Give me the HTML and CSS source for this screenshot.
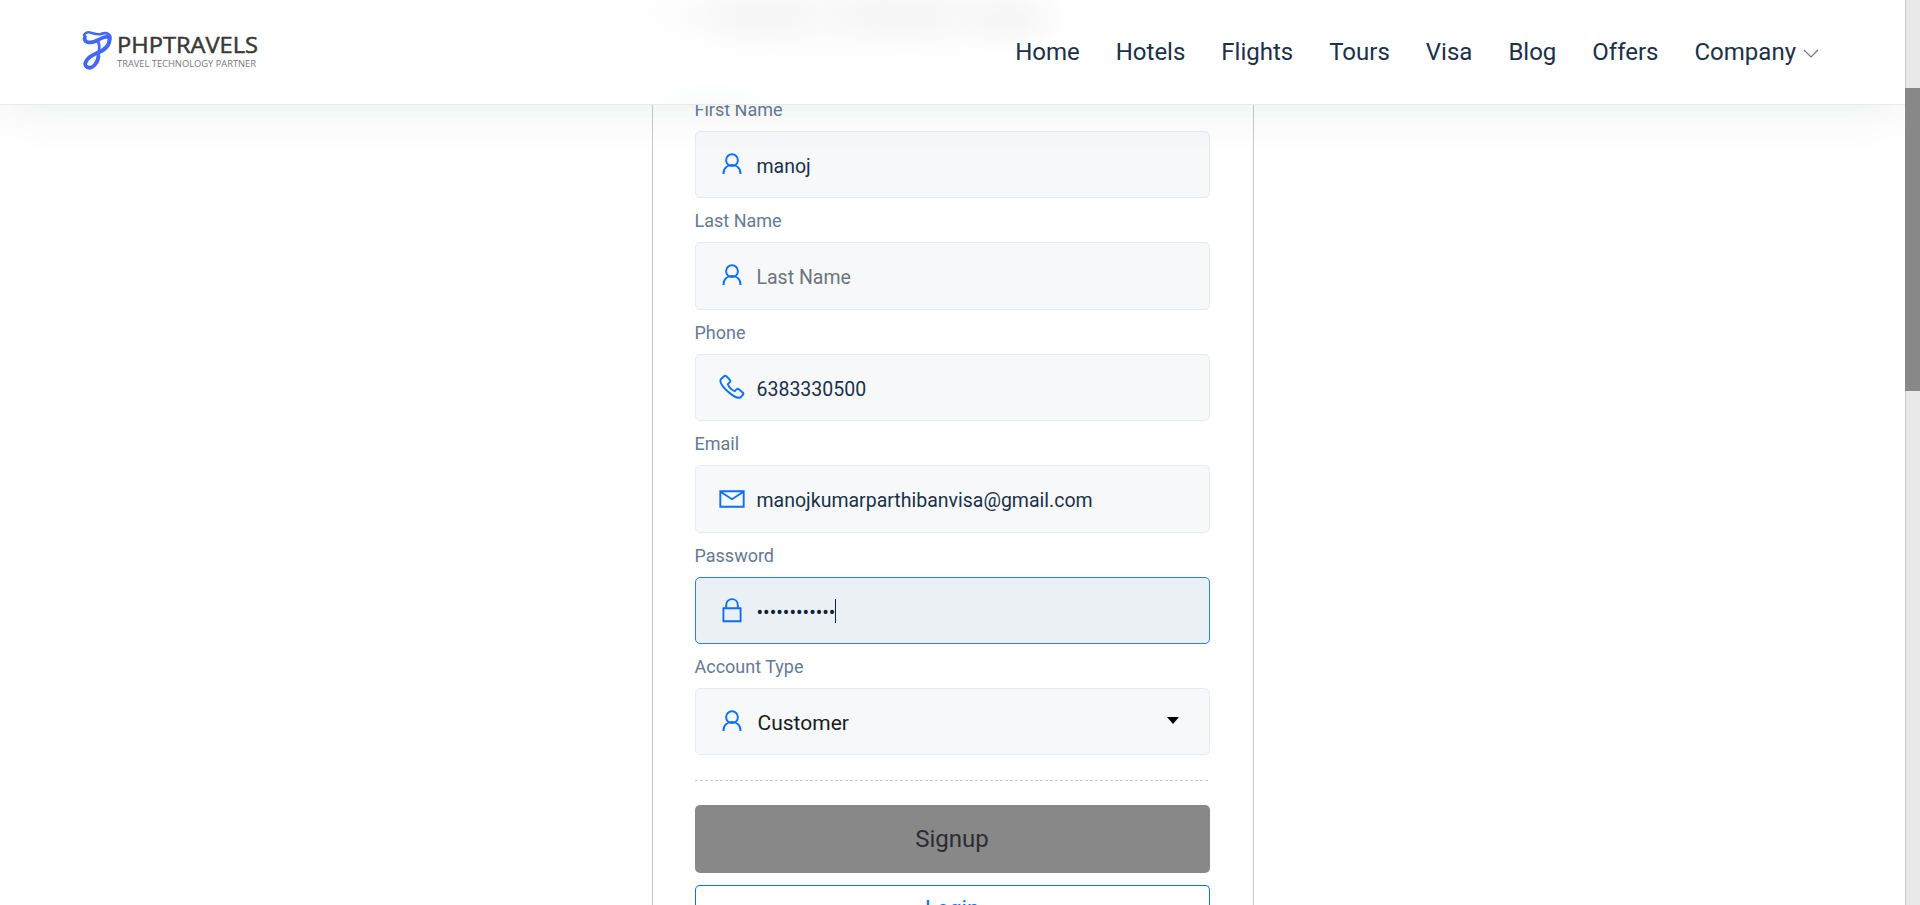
FILE: index.html
```html
<!DOCTYPE html>
<html lang="en">
<head>
<meta charset="utf-8">
<title>Signup - PHPTRAVELS</title>
<link rel="stylesheet" href="styles.css">
</head>
<body>
<svg class="defs" width="0" height="0">
  <symbol id="user" viewBox="0 0 26 26"><circle cx="13" cy="8.2" r="5.9"/><path d="M4.4 21.9C4.4 9.8 21.6 9.8 21.6 21.9"/></symbol>
  <symbol id="phone" viewBox="0 0 26 26"><path d="M5 2.2Q6.200 1.200 7.400 2.200L11 6.200Q11.700 7.300 10.800 8.200L8.800 10.200C10 13.400 12.900 16.200 15.800 17.100L17.700 15.200Q18.800 14.400 19.800 15.200L23.900 18.700Q24.800 19.700 23.900 20.900L21.400 23.400C17 26.500 -1.200 10.500 1.800 5.300Z"/></symbol>
  <symbol id="mail" viewBox="0 0 26 26"><path d="M1.300 5.200H24.700V20.700H1.300ZM1.500 5.700L13 13.200L24.500 5.700"/></symbol>
  <symbol id="lock" viewBox="0 0 26 26"><path d="M4.400 11.300H21.600V24.200H4.400ZM7.200 11V8C7.200 0.200 18.800 0.200 18.800 8V11"/></symbol>
</svg>
<div class="window">
  <div class="page">
    <header class="navbar">
      <svg class="logo" viewBox="0 0 184 44" width="184" height="44">
        <g class="ribbon">
          <path class="thick" d="M4 9C2 14 8 16 15 13C22 9 28 7 28.500 11C29 19 22 23 14 26C5 30 2 37 6 39C11 42 17 35 17.500 28"/>
          <path class="thin" d="M3 7C7 0.500 13 8 20 6C26 3.500 31 7 29 12M15 12C20 14 18 22 17.500 27"/>
        </g>
        <text class="brand" x="36" y="25" textLength="141" lengthAdjust="spacingAndGlyphs">PHPTRAVELS</text>
        <text class="tagline" x="36" y="38.500" textLength="139" lengthAdjust="spacingAndGlyphs">TRAVEL TECHNOLOGY PARTNER</text>
      </svg>
      <nav class="menu">
        <a>Home</a><a>Hotels</a><a>Flights</a><a>Tours</a><a>Visa</a><a>Blog</a><a>Offers</a>
        <a class="company">Company<svg class="chevron" width="16" height="10" viewBox="0 0 16 10"><path d="M1 1L8 8L15 1"/></svg></a>
      </nav>
    </header>
    <main class="card">
      <div class="field"><label>First Name</label><div class="input"><svg class="icon"><use href="#user"/></svg><span>manoj</span></div></div>
      <div class="field"><label>Last Name</label><div class="input placeholder"><svg class="icon"><use href="#user"/></svg><span>Last Name</span></div></div>
      <div class="field"><label>Phone</label><div class="input"><svg class="icon"><use href="#phone"/></svg><span>6383330500</span></div></div>
      <div class="field"><label>Email</label><div class="input"><svg class="icon"><use href="#mail"/></svg><span>manojkumarparthibanvisa@gmail.com</span></div></div>
      <div class="field"><label>Password</label><div class="input focused"><svg class="icon"><use href="#lock"/></svg><span class="password">••••••••••••</span><i class="caret"></i></div></div>
      <div class="field"><label>Account Type</label><div class="input select"><svg class="icon"><use href="#user"/></svg><span>Customer</span><i class="arrow"></i></div></div>
      <div class="divider"></div>
      <div class="button signup">Signup</div>
      <div class="button login">Login</div>
    </main>
  </div>
  <div class="scrollbar"><div class="thumb"></div></div>
</div>
</body>
</html>
```
FILE: styles.css
```css
* { box-sizing: border-box; }
body { margin: 0; background: #fff; color: #1b3049; font-family: Roboto, sans-serif; overflow: hidden; }
.defs { display: block; height: 0; }
.window { display: flex; width: 100%; height: 905px; }
.page { flex: 1; height: 905px; overflow: hidden; display: flex; flex-direction: column; align-items: center; }
.navbar {
  position: relative; flex: none; width: 100%; height: 105px; padding: 0 86px 0 81px;
  display: flex; justify-content: space-between; align-items: flex-start;
  border-bottom: 1px solid #e9eaeb;
  box-shadow: 0 0 50px rgba(82, 90, 95, .12);
  background:
    radial-gradient(ellipse 80px 34px at 760px 16px, #f5f5f5, rgba(255,255,255,0)),
    radial-gradient(ellipse 90px 34px at 905px 16px, #f5f5f5, rgba(255,255,255,0)),
    radial-gradient(ellipse 60px 36px at 1007px 18px, #f5f5f5, rgba(255,255,255,0)),
    radial-gradient(ellipse 75px 24px at 712px 104px, #f9fbfb, rgba(255,255,255,0)),
    radial-gradient(ellipse 260px 60px at 850px 14px, #f9f9f9, rgba(255,255,255,0)), #fff;
}
.logo { margin-top: 28px; overflow: visible; }
.ribbon { fill: none; stroke: #4269f5; stroke-linecap: round; }
.thick { stroke-width: 3.800; }
.thin { stroke-width: 2.600; }
.brand { font: 500 22.500px/1 "Open Sans", sans-serif; fill: #393939; stroke: #393939; stroke-width: .5; }
.tagline { font: 400 9.800px/1 "Open Sans", sans-serif; fill: #777; }
.menu { display: flex; gap: 36px; margin-top: 36px; font-size: 24px; line-height: 32px; }
.company { display: flex; align-items: center; gap: 7px; }
.chevron { margin-top: 3px; fill: none; stroke: #6f7680; stroke-width: 1.200; }
.card { width: 602px; flex: 1 0 auto; border: solid #c8c8c8; border-width: 0 1px; padding: 0 43px 0 42px; margin-top: -18px; }
.field { height: 111.400px; display: flex; flex-direction: column; }
.field label { height: 44px; padding-top: 11px; font-size: 18px; line-height: 24px; color: #667a94; }
.input { height: 67.400px; border: 1px solid #e7ecf1; border-radius: 5px; background: #f6f8fa; display: flex; align-items: center; padding-left: 23.500px; font-size: 19.500px; }
.input span { margin-left: 11.500px; padding-top: 3.500px; }
.icon { width: 26px; height: 26px; flex: none; fill: none; stroke: #0d6efd; stroke-width: 1.900; }
.placeholder span { color: #6c757d; }
.focused { background: #ebf0f4; border-color: #287dfa; }
.input .password { padding-top: 4px; color: #0d233e; }
.caret { width: 1px; height: 24px; margin-top: 2px; background: #0d233e; }
.select { color: #1a1a1a; font-size: 21px; }
.input.select span { margin-left: 12.500px; padding-top: 2.500px; }
.arrow { margin: -2px 30px 0 auto; border: solid transparent; border-width: 7px 6px 0; border-top-color: #000; }
.divider { margin-top: 25px; height: 1px; background: repeating-linear-gradient(90deg, #ccc 0 3px, transparent 3px 5px); }
.button { display: flex; align-items: center; justify-content: center; height: 68px; border-radius: 5px; font-size: 24px; }
.signup { margin-top: 24px; background: #888; color: #2a2e32; }
.login { margin-top: 12px; border: 1px solid #0d6efd; border-bottom: 0; color: #0d6efd; height: 46px; font-size: 22px; }
.scrollbar { width: 15px; flex: none; padding-top: 88px; background: #e8e8e8; box-shadow: inset 1px 0 #c8c8c8; z-index: 1; }
.thumb { height: 303px; background: #888; }
```
